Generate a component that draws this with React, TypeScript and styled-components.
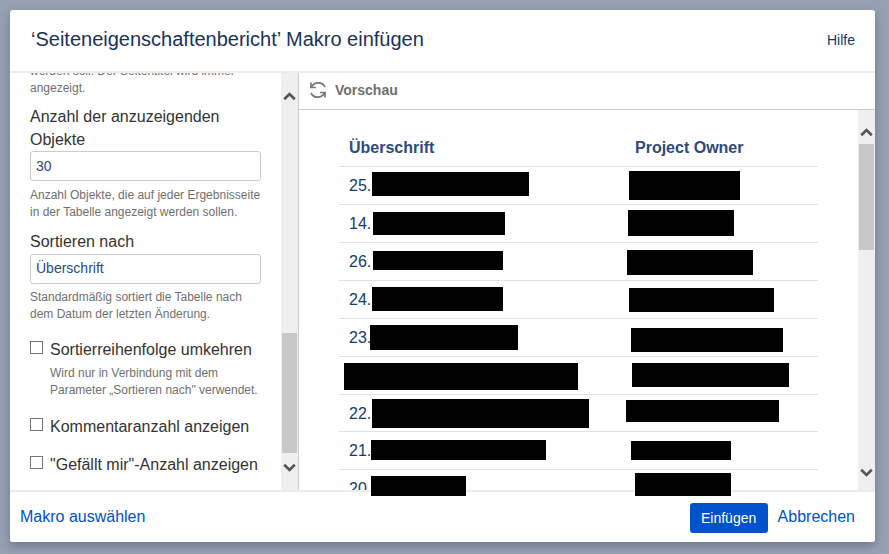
import React from "react";
import styled, { createGlobalStyle } from "styled-components";

const Global = createGlobalStyle`
  html, body { margin: 0; padding: 0; height: 100%; }
  body { background: #97a0b2; font-family: "Liberation Sans", Arial, sans-serif; overflow: hidden; }
  * { box-sizing: border-box; }
`;

const Page = styled.div`
  width: 889px;
  height: 554px;
  padding: 10px 14px 12px 10px;
`;

const Dialog = styled.div`
  width: 865px;
  height: 532px;
  background: #fff;
  border-radius: 3px;
  box-shadow: 0 4px 10px rgba(9, 30, 66, 0.3);
  display: flex;
  flex-direction: column;
  overflow: hidden;
`;

const Header = styled.header`
  height: 63px;
  flex: none;
  display: flex;
  align-items: center;
  justify-content: space-between;
  padding: 0 20px 2px 21px;
  border-bottom: 2px solid #ebecf0;
`;

const Title = styled.h2`
  margin: 0;
  font-size: 20px;
  font-weight: 400;
  color: #1a3358;
`;

const HelpLink = styled.a`
  font-size: 14px;
  color: #0e3a6b;
`;

const Body = styled.div`
  flex: 1;
  min-height: 0;
  display: flex;
`;

const Form = styled.div`
  width: 271px;
  flex: none;
  overflow: hidden;
  padding: 0 20px;
`;

const Help = styled.p<{ $indent?: boolean }>`
  margin: 0;
  font-size: 12px;
  line-height: 17px;
  color: #707070;
  padding-left: ${(p) => (p.$indent ? "20px" : "0")};
`;

const ClippedHelp = styled(Help)`
  margin-top: -10px;
`;

const FieldLabel = styled.label`
  display: block;
  font-size: 16px;
  line-height: 23px;
  color: #333;
`;

const NumberLabel = styled(FieldLabel)`
  margin: 8px 0 -1px;
`;

const SortLabel = styled(FieldLabel)`
  margin-top: 9px;
`;

const TextField = styled.div`
  width: 231px;
  height: 30px;
  margin: 1px 0 6px;
  padding: 0 5px;
  display: flex;
  align-items: center;
  border: 1px solid #ccc;
  border-radius: 3px;
  font-size: 14px;
  color: #2b4a80;
`;

const SortField = styled(TextField)`
  margin-bottom: 5px;
  padding-bottom: 2px;
`;

const CheckRow = styled.div<{ $gap: number }>`
  display: flex;
  align-items: center;
  gap: 7px;
  height: 23px;
  margin-top: ${(p) => p.$gap}px;
  font-size: 16px;
  color: #333;
`;

const Box = styled.span`
  width: 13px;
  height: 13px;
  flex: none;
  margin-top: -4px;
  border: 1px solid #767676;
`;

const CheckHelp = styled(Help)`
  margin-top: 4px;
`;

const Track = styled.div<{ $thumbTop: number; $thumbHeight: number }>`
  width: 17px;
  flex: none;
  background: #efefef;
  position: relative;
  &::after {
    content: "";
    position: absolute;
    left: 1px;
    right: 1px;
    top: ${(p) => p.$thumbTop}px;
    height: ${(p) => p.$thumbHeight}px;
    background: #c8c8c8;
  }
`;

const Arrow = styled.svg<{ $top?: number; $bottom?: number }>`
  position: absolute;
  left: 2px;
  width: 13px;
  height: 10px;
  ${(p) => (p.$top !== undefined ? `top: ${p.$top}px;` : "")}
  ${(p) => (p.$bottom !== undefined ? `bottom: ${p.$bottom}px;` : "")}
`;

const Preview = styled.div`
  flex: 1;
  min-width: 0;
  border-left: 1px solid #ccc;
  display: flex;
  flex-direction: column;
`;

const PreviewBar = styled.div`
  height: 37px;
  flex: none;
  display: flex;
  align-items: center;
  gap: 9px;
  padding: 0 0 2px 11px;
  border-bottom: 1px solid #ccc;
  font-size: 14px;
  font-weight: 700;
  color: #707070;
`;

const PreviewBody = styled.div`
  flex: 1;
  min-height: 0;
  display: flex;
`;

const Content = styled.div`
  flex: 1;
  min-width: 0;
  padding: 19px 0 0 40px;
`;

const Table = styled.div`
  width: 479px;
`;

const HeadRow = styled.div`
  display: grid;
  grid-template-columns: 286px 1fr;
  height: 38px;
  padding: 10px 0 0 10px;
  border-bottom: 1px solid #dfe1e6;
  font-size: 16px;
  font-weight: 700;
  color: #2e4a7d;
`;

const Row = styled.div<{ $h: number }>`
  display: grid;
  grid-template-columns: 286px 1fr;
  height: ${(p) => p.$h}px;
  border-bottom: 1px solid #dfe1e6;
  font-size: 16px;
  color: #1a3a6b;
`;

const Cell = styled.div`
  display: flex;
  align-items: flex-start;
  min-width: 0;
`;

const Num = styled.span`
  width: 23px;
  margin-left: 10px;
  flex: none;
  line-height: 37px;
`;

const Redact = styled.span<{ $x: number; $y: number; $w: number; $h: number }>`
  display: block;
  flex: none;
  background: #000;
  width: ${(p) => p.$w}px;
  height: ${(p) => p.$h}px;
  margin-left: ${(p) => p.$x}px;
  margin-top: ${(p) => p.$y}px;
  position: relative;
  z-index: 3;
`;

const Footer = styled.footer`
  height: 52px;
  flex: none;
  display: flex;
  align-items: center;
  justify-content: space-between;
  padding: 2px 20px 0 10px;
  border-top: 2px solid #ebecf0;
  background: #fff;
  position: relative;
  z-index: 2;
  font-size: 16px;
`;

const FooterLink = styled.a`
  color: #0052cc;
  margin-top: -2px;
`;

const Actions = styled.div`
  display: flex;
  align-items: center;
  gap: 10px;
`;

const Primary = styled.button`
  width: 78px;
  height: 30px;
  border: none;
  border-radius: 3px;
  background: #0052cc;
  color: #fff;
  font: 400 14px "Liberation Sans", Arial, sans-serif;
  padding: 0;
`;

const Up = ({ top }: { top: number }) => (
  <Arrow $top={top} viewBox="0 0 13 10"><path d="M1.2 8.2 L6.5 3 L11.8 8.2" fill="none" stroke="#555" strokeWidth="2.6" /></Arrow>
);
const Down = ({ bottom }: { bottom: number }) => (
  <Arrow $bottom={bottom} viewBox="0 0 13 10"><path d="M1.2 1.8 L6.5 7 L11.8 1.8" fill="none" stroke="#555" strokeWidth="2.6" /></Arrow>
);

type Rect = [number, number, number, number];
type R = { n?: string; h?: number; a: Rect; b: Rect };
const rows: R[] = [
  { n: "25.", a: [0, 5, 157, 24], b: [0, 4, 111, 29] },
  { n: "14.", a: [1, 7, 132, 23], b: [-1, 5, 106, 26] },
  { n: "26.", a: [1, 8, 130, 19], b: [-2, 7, 126, 25] },
  { n: "24.", a: [0, 6, 131, 24], b: [0, 7, 145, 24] },
  { n: "23.", a: [-2, 6, 148, 25], b: [2, 9, 152, 24] },
  { a: [5, 6, 234, 27], b: [3, 6, 157, 24] },
  { n: "22.", h: 37, a: [0, 4, 217, 29], b: [-3, 5, 153, 22] },
  { n: "21.", a: [-1, 8, 175, 20], b: [2, 9, 100, 19] },
  { n: "20.", a: [-1, 6, 95, 20], b: [6, 3, 96, 23] },
];

export default function App() {
  return (
    <Page>
      <Global />
      <Dialog>
        <Header>
          <Title>‘Seiteneigenschaftenbericht’ Makro einfügen</Title>
          <HelpLink>Hilfe</HelpLink>
        </Header>
        <Body>
          <Form>
            <ClippedHelp>werden soll. Der Seitentitel wird immer angezeigt.</ClippedHelp>
            <NumberLabel>Anzahl der anzuzeigenden Objekte</NumberLabel>
            <TextField>30</TextField>
            <Help>Anzahl Objekte, die auf jeder Ergebnisseite in der Tabelle angezeigt werden sollen.</Help>
            <SortLabel>Sortieren nach</SortLabel>
            <SortField>Überschrift</SortField>
            <Help>Standardmäßig sortiert die Tabelle nach dem Datum der letzten Änderung.</Help>
            <CheckRow $gap={15}><Box />Sortierreihenfolge umkehren</CheckRow>
            <CheckHelp $indent>Wird nur in Verbindung mit dem Parameter „Sortieren nach" verwendet.</CheckHelp>
            <CheckRow $gap={16}><Box />Kommentaranzahl anzeigen</CheckRow>
            <CheckRow $gap={15}><Box />"Gefällt mir"-Anzahl anzeigen</CheckRow>
          </Form>
          <Track $thumbTop={260} $thumbHeight={120}>
            <Up top={18} />
            <Down bottom={17} />
          </Track>
          <Preview>
            <PreviewBar>
              <svg width="16" height="16" viewBox="0 0 16 16" fill="none" stroke="#777" strokeWidth="1.7">
                <path d="M1 0.5 V5.5 H6" />
                <path d="M1 5.5 C3 2 6 0.8 8.5 0.8 C11 0.8 13.5 2 15 5" />
                <path d="M15 15.5 V10.5 H10" />
                <path d="M15 10.5 C13 14 10 15.2 7.5 15.2 C5 15.2 2.5 14 1 11" />
              </svg>
              Vorschau
            </PreviewBar>
            <PreviewBody>
              <Content>
                <Table>
                  <HeadRow>
                    <span>Überschrift</span>
                    <span>Project Owner</span>
                  </HeadRow>
                  {rows.map((r, i) => (
                    <Row key={i} $h={r.h ?? 38}>
                      <Cell>
                        {r.n && <Num>{r.n}</Num>}
                        <Redact $x={r.a[0]} $y={r.a[1]} $w={r.a[2]} $h={r.a[3]} />
                      </Cell>
                      <Cell>
                        <Redact $x={4 + r.b[0]} $y={r.b[1]} $w={r.b[2]} $h={r.b[3]} />
                      </Cell>
                    </Row>
                  ))}
                </Table>
              </Content>
              <Track $thumbTop={34} $thumbHeight={106}>
                <Up top={17} />
                <Down bottom={12} />
              </Track>
            </PreviewBody>
          </Preview>
        </Body>
        <Footer>
          <FooterLink>Makro auswählen</FooterLink>
          <Actions>
            <Primary>Einfügen</Primary>
            <FooterLink>Abbrechen</FooterLink>
          </Actions>
        </Footer>
      </Dialog>
    </Page>
  );
}
